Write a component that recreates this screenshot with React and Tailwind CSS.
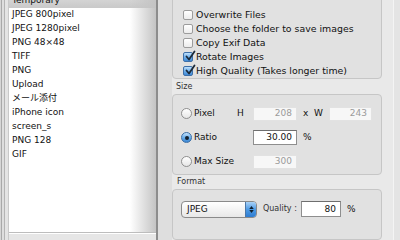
import React from 'react';

const formats = [
  'Temporary',
  'JPEG 800pixel',
  'JPEG 1280pixel',
  'PNG 48×48',
  'TIFF',
  'PNG',
  'Upload',
  'メール添付',
  'iPhone icon',
  'screen_s',
  'PNG 128',
  'GIF',
];

const options = [
  { label: 'Overwrite Files', checked: false },
  { label: 'Choose the folder to save images', checked: false },
  { label: 'Copy Exif Data', checked: false },
  { label: 'Rotate Images', checked: true },
  { label: 'High Quality (Takes longer time)', checked: true },
];

function Checkbox({ checked }) {
  if (checked) {
    return (
      <span className="relative w-[10px] h-[10px] rounded-[2px] border border-[#3d6fa8] bg-gradient-to-b from-[#bfe0fb] via-[#6fb0ec] to-[#3f8ad6] shrink-0">
        <svg viewBox="0 0 12 12" className="absolute left-[0px] top-[-3px] w-[12px] h-[12px]">
          <path d="M2.5 6.5 L5 9.5 L10.5 1.5" fill="none" stroke="#1b2a3a" strokeWidth="1.8" strokeLinecap="round" strokeLinejoin="round" />
        </svg>
      </span>
    );
  }
  return (
    <span className="w-[10px] h-[10px] rounded-[2px] border border-[#9c9c9c] bg-gradient-to-b from-white to-[#ececec] shrink-0" />
  );
}

function Radio({ checked }) {
  if (checked) {
    return (
      <span className="flex items-center justify-center w-[11px] h-[11px] rounded-full border border-[#3b6ea5] bg-gradient-to-b from-[#c4e2fb] via-[#6aaeea] to-[#3a86d3] shrink-0">
        <span className="w-[4px] h-[4px] rounded-full bg-[#14202e]" />
      </span>
    );
  }
  return (
    <span className="w-[11px] h-[11px] rounded-full border border-[#8f8f8f] bg-gradient-to-b from-white to-[#e6e6e6] shrink-0" />
  );
}

function Field({ value, active, width }) {
  return (
    <span
      className={
        'flex items-center justify-end pr-[4px] h-[14px] ' +
        width +
        (active
          ? ' bg-white border border-[#8e8e8e] border-t-[#6e6e6e] text-[#111]'
          : ' bg-[#f7f7f7] border border-[#e2e2e2] text-[#9b9b9b]')
      }
    >
      {value}
    </span>
  );
}

export default function App() {
  return (
    <div
      className="w-[400px] h-[240px] overflow-hidden flex bg-[#e9e9e9] text-[9px] text-[#111]"
      style={{ fontFamily: '"DejaVu Sans", "Noto Sans CJK JP", sans-serif' }}
    >
      {/* left strip */}
      <div className="w-[9px] h-full flex">
        <div className="w-[1px] bg-[#d6d6d6]" />
        <div className="w-[1px] bg-[#a9a9a9]" />
        <div className="w-[2px] bg-[#dedede]" />
        <div className="w-[1px] bg-[#b4b4b4]" />
        <div className="w-[3px] bg-[#e4e4e4]" />
        <div className="w-[1px] bg-[#c9c9c9]" />
      </div>

      {/* format list */}
      <div className="w-[147px] flex flex-col">
        <div className="relative h-[233px] bg-white border-b border-[#bdbdbd] overflow-hidden">
          <div className="mt-[-6px] flex flex-col">
            {formats.map((f, i) => (
              <div
                key={f}
                className={
                  'h-[14px] flex items-center pl-[3px] whitespace-nowrap ' +
                  (i === 0 ? 'bg-gradient-to-b from-[#dcdcdc] to-[#c9c9c9]' : '')
                }
              >
                {f}
              </div>
            ))}
          </div>
          <div className="absolute top-0 right-0 w-[26px] h-full bg-gradient-to-r from-white/0 to-[#c4c4c4]" />
        </div>
        <div className="flex-1 bg-[#e6e6e6] border-t border-white" />
      </div>

      {/* splitter */}
      <div className="w-[16px] h-full flex">
        <div className="w-[2px] bg-[#8d8d8d]" />
        <div className="flex-1 bg-[#dedede]" />
      </div>

      {/* settings */}
      <div className="w-[210px] flex flex-col">
        <div className="mt-[-10px] h-[94px] rounded-[4px] border border-[#c6c6c6] bg-[#e1e1e1] pt-[17px] pl-[10px] flex flex-col text-[9.4px]">
          {options.map((o) => (
            <div key={o.label} className="h-[14px] flex items-center gap-[3px] whitespace-nowrap">
              <Checkbox checked={o.checked} />
              <span>{o.label}</span>
            </div>
          ))}
        </div>

        <div className="h-[18px] flex items-end pl-[4px] pb-[1px] text-[8px] text-[#333]">Size</div>
        <div className="h-[84px] rounded-[4px] border border-[#c6c6c6] bg-[#e1e1e1] pt-[7px] pl-[8px] flex flex-col">
          <div className="h-[24px] flex items-center whitespace-nowrap">
            <span className="w-[56px] flex items-center gap-[2px]">
              <Radio checked={false} />
              <span>Pixel</span>
            </span>
            <span className="w-[16px]">H</span>
            <Field value="208" width="w-[44px]" />
            <span className="w-[32px] pl-[6px]">x&nbsp;&nbsp;W</span>
            <Field value="243" width="w-[43px]" />
          </div>
          <div className="h-[24px] flex items-center whitespace-nowrap">
            <span className="w-[72px] flex items-center gap-[2px]">
              <Radio checked />
              <span>Ratio</span>
            </span>
            <Field value="30.00" active width="w-[44px] h-[15px]" />
            <span className="pl-[6px]">%</span>
          </div>
          <div className="h-[24px] flex items-center whitespace-nowrap">
            <span className="w-[72px] flex items-center gap-[2px]">
              <Radio checked={false} />
              <span>Max Size</span>
            </span>
            <Field value="300" width="w-[44px]" />
          </div>
        </div>

        <div className="h-[17px] flex items-end pl-[5px] pb-[1px] text-[8px] text-[#333]">Format</div>
        <div className="h-[60px] rounded-[4px] border border-[#c6c6c6] bg-[#e1e1e1] pt-[11px] pl-[8px]">
          <div className="flex items-center whitespace-nowrap">
            <span className="flex w-[76px] h-[17px] rounded-[4px] border border-[#8a8a8a] bg-gradient-to-b from-white to-[#e8e8e8] overflow-hidden">
              <span className="flex-1 flex items-center pl-[5px]">JPEG</span>
              <span className="w-[11px] flex flex-col items-center justify-center gap-[1px] bg-gradient-to-b from-[#a9d2f7] via-[#4c9ae4] to-[#2d7bd0] border-l border-[#4a77a8]">
                <svg viewBox="0 0 6 4" className="w-[5px] h-[3px]"><path d="M0 4 L3 0 L6 4 Z" fill="#10202f" /></svg>
                <svg viewBox="0 0 6 4" className="w-[5px] h-[3px]"><path d="M0 0 L3 4 L6 0 Z" fill="#10202f" /></svg>
              </span>
            </span>
            <span className="pl-[6px] w-[44px] text-[8px] text-[#333]">Quality :</span>
            <Field value="80" active width="w-[40px] h-[16px]" />
            <span className="pl-[6px]">%</span>
          </div>
        </div>
      </div>

      {/* right edge */}
      <div className="flex-1 flex">
        <div className="w-[11px]" />
        <div className="w-[1px] bg-[#f4f4f4]" />
        <div className="flex-1 bg-[#e4e4e4]" />
      </div>
    </div>
  );
}
